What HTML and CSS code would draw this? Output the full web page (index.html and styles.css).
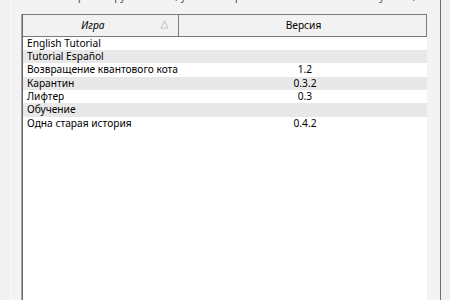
FILE: index.html
```html
<!DOCTYPE html>
<html lang="ru">
<head>
  <meta charset="UTF-8">
  <title>Игры</title>
  <link rel="stylesheet" href="styles.css">
</head>
<body>
  <div class="window">
    <div class="panel">
      <div class="caption">Выберите игру из списка, укажите версию и затем нажмите кнопку ниже, чтобы продолжить</div>
      <div class="list">
        <div class="list-head">
          <div class="col col-name">
            <span class="col-label">Игра</span>
            <svg class="sort" viewBox="0 0 10 10"><path d="M1 9 L5 1 L9 9 Z"/></svg>
          </div>
          <div class="col col-ver">Версия</div>
        </div>
        <div class="list-body">
          <div class="row"><span class="cell name">English Tutorial</span><span class="cell ver"></span></div>
          <div class="row"><span class="cell name">Tutorial Español</span><span class="cell ver"></span></div>
          <div class="row"><span class="cell name">Возвращение квантового кота</span><span class="cell ver">1.2</span></div>
          <div class="row"><span class="cell name">Карантин</span><span class="cell ver">0.3.2</span></div>
          <div class="row"><span class="cell name">Лифтер</span><span class="cell ver">0.3</span></div>
          <div class="row"><span class="cell name">Обучение</span><span class="cell ver"></span></div>
          <div class="row"><span class="cell name">Одна старая история</span><span class="cell ver">0.4.2</span></div>
        </div>
      </div>
    </div>
  </div>
</body>
</html>
```

FILE: styles.css
```css
html, body {margin:0; padding:0; height:100%;}
body {
  background:#f0f0f0;
  font-family:"Noto Sans", "Open Sans", sans-serif;
  font-size:10.2px;
  color:#000;
  overflow:hidden;
}
.window {height:300px; padding-left:10px; box-sizing:border-box;}
.panel {
  width:431px; height:100%;
  box-sizing:border-box;
  border-left:1px solid #fbfbfb;
  border-right:1px solid #6e6e6e;
  background:#f3f3f3;
  padding:0 13px 0 11px;
  display:flex; flex-direction:column;
}
/* label row, scrolled mostly out of view */
.caption {
  height:14px; line-height:14px;
  margin-top:-11px;
  white-space:nowrap; overflow:hidden;
  padding-left:30px;
  color:#444;
}
.list {
  margin-top:11px;
  flex:1;
  background:#fff;
  border-left:1px solid #696969;
  box-shadow:-1px 0 0 #a3a3a3;
}
.list-head {
  display:flex;
  height:22.67px; box-sizing:border-box;
  border-top:1px solid #7a7a7a;
  border-bottom:1px solid #7a7a7a;
  border-right:1px solid #7a7a7a;
  background:#f2f2f2;
}
.col {display:flex; align-items:center;}
.col-name {width:156px; box-sizing:border-box; border-right:1px solid #7a7a7a;}
.col-label {flex:1; text-align:center; font-style:italic; padding-left:3px;}
.sort {width:9px; height:9px; margin-right:9px; margin-bottom:1px;}
.sort path {fill:none; stroke:#bcbcbc; stroke-width:1;}
.col-ver {flex:1; justify-content:center; padding-left:2px;}
.row {display:flex; height:13.33px; line-height:13.33px;}
.row:nth-child(even) {background:#e8e8e8;}
.cell {white-space:nowrap;}
.name {width:156px; padding-left:4px; box-sizing:border-box;}
.ver {flex:1; text-align:center; padding-left:4px;}
```
